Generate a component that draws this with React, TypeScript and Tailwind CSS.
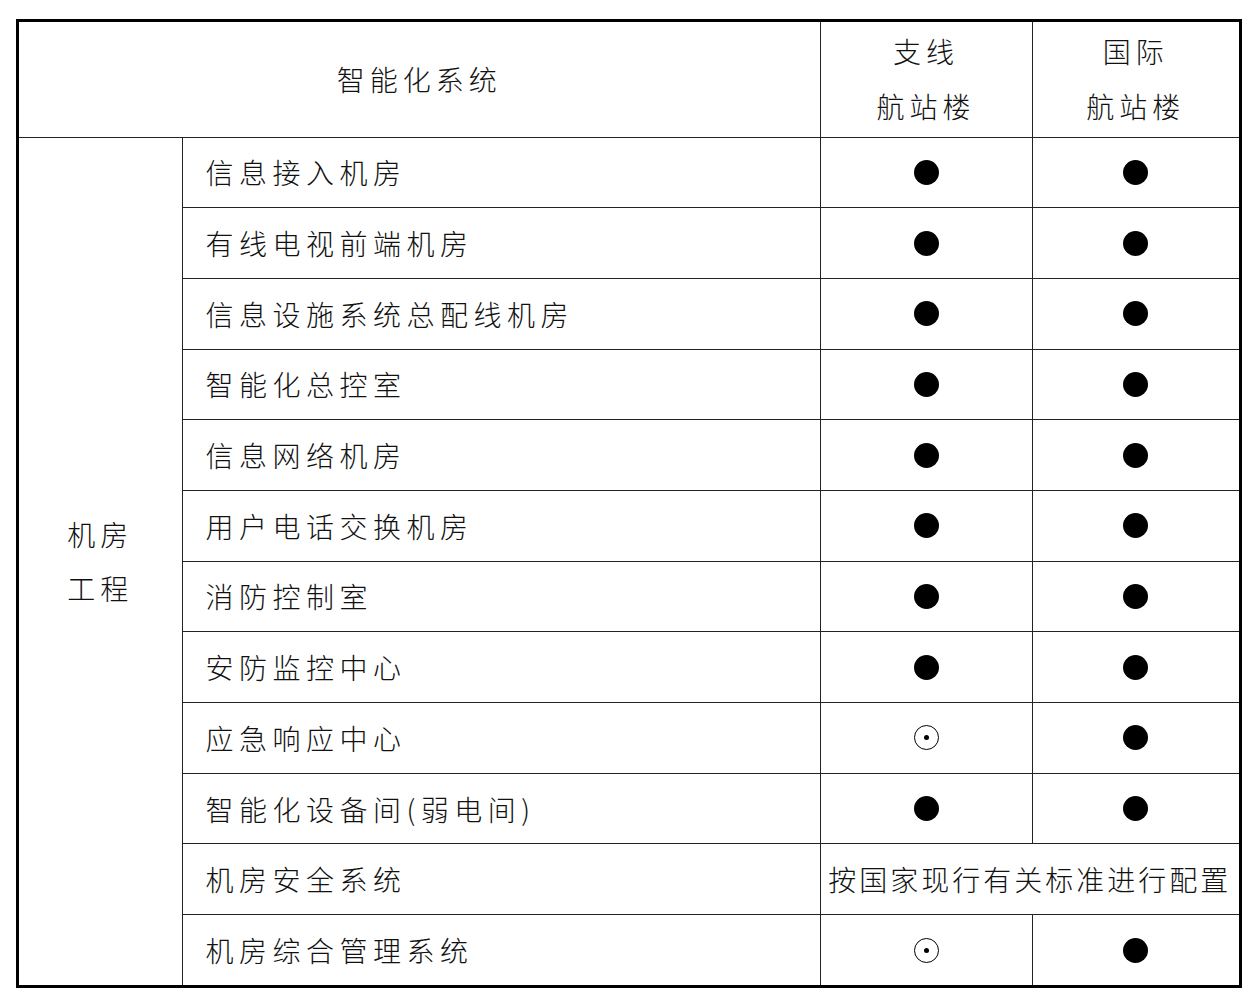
import React from "react";

type Mark = "full" | "partial";

// 行数据：名称、支线航站楼、国际航站楼（note 表示合并说明行）
const rows: { name: string; branch?: Mark; intl?: Mark; note?: string }[] = [
  { name: "信息接入机房", branch: "full", intl: "full" },
  { name: "有线电视前端机房", branch: "full", intl: "full" },
  { name: "信息设施系统总配线机房", branch: "full", intl: "full" },
  { name: "智能化总控室", branch: "full", intl: "full" },
  { name: "信息网络机房", branch: "full", intl: "full" },
  { name: "用户电话交换机房", branch: "full", intl: "full" },
  { name: "消防控制室", branch: "full", intl: "full" },
  { name: "安防监控中心", branch: "full", intl: "full" },
  { name: "应急响应中心", branch: "partial", intl: "full" },
  { name: "智能化设备间(弱电间)", branch: "full", intl: "full" },
  { name: "机房安全系统", note: "按国家现行有关标准进行配置" },
  { name: "机房综合管理系统", branch: "partial", intl: "full" },
];

function Symbol({ kind }: { kind?: Mark }) {
  if (kind === "full") {
    return <div className="mx-auto w-[25px] h-[25px] rounded-full bg-black" />;
  }
  return (
    <div className="mx-auto w-[25px] h-[25px] rounded-full border border-black flex items-center justify-center">
      <div className="w-[5px] h-[5px] rounded-full bg-black" />
    </div>
  );
}

export default function App() {
  const font = "font-['Noto_Sans_CJK_SC','Noto_Sans_CJK_JP',sans-serif]";
  return (
    <div className={`w-[1259px] h-[1006px] bg-white pt-[19px] pl-[16px] ${font} font-light text-[28px] text-[#111]`}>
      <div className="w-[1226px] border-[3px] border-black">
        <table className="w-[1220px] table-fixed border-collapse border-hidden">
          <colgroup>
            <col className="w-[163px]" />
            <col className="w-[638px]" />
            <col className="w-[212px]" />
            <col className="w-[207px]" />
          </colgroup>
          <thead>
            <tr className="h-[115px]">
              <th colSpan={2} className="border border-[#222] font-light tracking-[5px] text-center align-middle">
                智能化系统
              </th>
              <th className="border border-[#222] font-light tracking-[5px] leading-[55px] text-center">
                支线
                <br />
                航站楼
              </th>
              <th className="border border-[#222] font-light tracking-[5px] leading-[55px] text-center">
                国际
                <br />
                航站楼
              </th>
            </tr>
          </thead>
          <tbody>
            {rows.map((r, i) => (
              <tr key={r.name} className="h-[70.7px]">
                {i === 0 && (
                  <td rowSpan={rows.length} className="border border-[#222] text-center leading-[54px] tracking-[5px]">
                    机房
                    <br />
                    工程
                  </td>
                )}
                <td className="border border-[#222] pl-[23px] tracking-[5.5px] whitespace-nowrap">{r.name}</td>
                {r.note ? (
                  <td colSpan={2} className="border border-[#222] text-center tracking-[3px] whitespace-nowrap">
                    {r.note}
                  </td>
                ) : (
                  <>
                    <td className="border border-[#222] text-center">
                      <Symbol kind={r.branch} />
                    </td>
                    <td className="border border-[#222] text-center">
                      <Symbol kind={r.intl} />
                    </td>
                  </>
                )}
              </tr>
            ))}
          </tbody>
        </table>
      </div>
    </div>
  );
}
